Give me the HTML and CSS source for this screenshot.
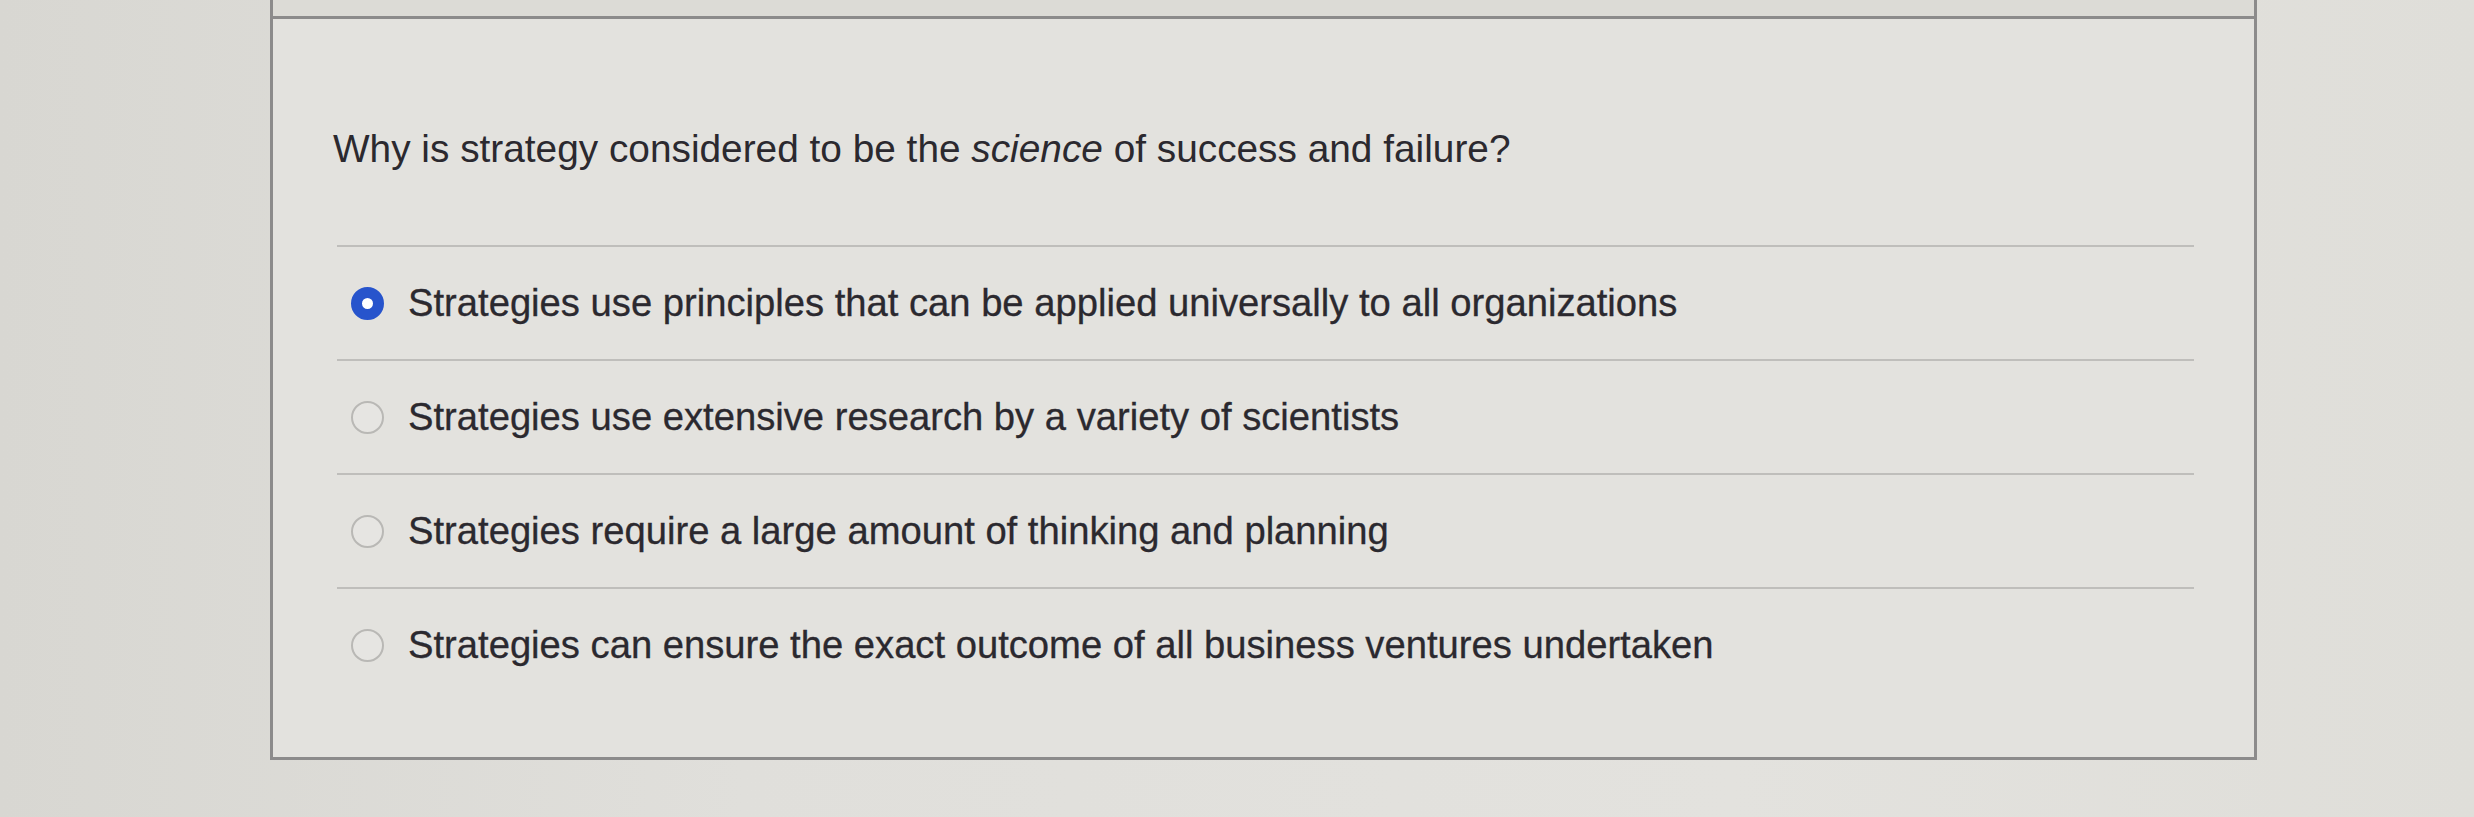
FILE: index.html
```html
<!DOCTYPE html>
<html lang="en">
<head>
<meta charset="utf-8">
<title>Question</title>
<link rel="stylesheet" href="styles.css">
</head>
<body>
<div class="page">
  <div class="prev-box"></div>
  <div class="card">
    <p class="question">Why is strategy considered to be the <em>science</em> of success and failure?</p>
    <ul class="options">
      <li class="option">
        <span class="radio radio-on"></span>
        <span class="label">Strategies use principles that can be applied universally to all organizations</span>
      </li>
      <li class="option">
        <span class="radio"></span>
        <span class="label">Strategies use extensive research by a variety of scientists</span>
      </li>
      <li class="option">
        <span class="radio"></span>
        <span class="label">Strategies require a large amount of thinking and planning</span>
      </li>
      <li class="option">
        <span class="radio"></span>
        <span class="label">Strategies can ensure the exact outcome of all business ventures undertaken</span>
      </li>
    </ul>
  </div>
</div>
</body>
</html>
```

FILE: styles.css
```css
html, body {
  margin: 0;
  padding: 0;
}

body {
  width: 2474px;
  height: 817px;
  overflow: hidden;
  background: linear-gradient(to right, #d8d7d2 0%, #e0dfdb 30%, #e3e2de 70%, #dfded9 100%);
  font-family: "Liberation Sans", Arial, sans-serif;
  color: #2b292f;
}

.page {
  margin-left: 270px;
  width: 1987px;
}

.prev-box {
  height: 16px;
  border-left: 3px solid #8c8b8b;
  border-right: 3px solid #8c8b8b;
  background: #dcdbd6;
}

.card {
  border: 3px solid #8c8b8b;
  background: #e3e2de;
  padding: 108px 60px 56px 60px;
}

.question {
  margin: 0 0 74px 0;
  font-size: 38.8px;
  line-height: 44px;
}

.question em {
  font-style: italic;
}

.options {
  list-style: none;
  margin: 0 0 0 4px;
  padding: 0;
}

.option {
  display: flex;
  align-items: center;
  gap: 24px;
  height: 112px;
  border-top: 2px solid #bfbebb;
  padding-left: 14px;
  font-size: 38.2px;
}

.radio {
  flex: none;
  box-sizing: border-box;
  width: 33px;
  height: 33px;
  border-radius: 50%;
  border: 2px solid #b9b8b5;
  background: #e6e5e2;
}

.radio-on {
  border: 11px solid #2754cc;
  background: #ffffff;
}

.label {
  white-space: nowrap;
  -webkit-text-stroke: 0.3px #2b292f;
}
```
